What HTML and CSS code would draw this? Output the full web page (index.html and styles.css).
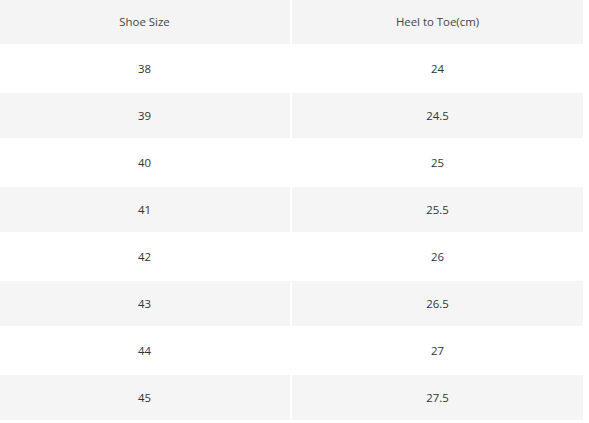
FILE: index.html
```html
<!DOCTYPE html>
<html>
<head>
<meta charset="utf-8">
<link rel="stylesheet" href="styles.css">
</head>
<body>
<table class="size-table">
  <thead>
    <tr><th>Shoe Size</th><th>Heel to Toe(cm)</th></tr>
  </thead>
  <tbody>
    <tr><td>38</td><td>24</td></tr>
    <tr class="alt"><td>39</td><td>24.5</td></tr>
    <tr><td>40</td><td>25</td></tr>
    <tr class="alt"><td>41</td><td>25.5</td></tr>
    <tr><td>42</td><td>26</td></tr>
    <tr class="alt"><td>43</td><td>26.5</td></tr>
    <tr><td>44</td><td>27</td></tr>
    <tr class="alt"><td>45</td><td>27.5</td></tr>
  </tbody>
</table>
</body>
</html>
```
FILE: styles.css
```css
html, body {
  margin: 0;
  padding: 0;
  background: #fff;
}
.size-table {
  margin: -3px 0 0 -3px;
  border-collapse: separate;
  border-spacing: 2px;
  font-family: "Open Sans", "Noto Sans", sans-serif;
  font-size: 11.4px;
  color: #333;
}
.size-table th,
.size-table td {
  width: 291px;
  height: 45px;
  padding: 0;
  text-align: center;
  vertical-align: middle;
  font-weight: normal;
  box-sizing: border-box;
}
.size-table th {
  background: #f4f4f4;
  color: #444;
}
.size-table .alt td {
  background: #f5f5f5;
}
```
